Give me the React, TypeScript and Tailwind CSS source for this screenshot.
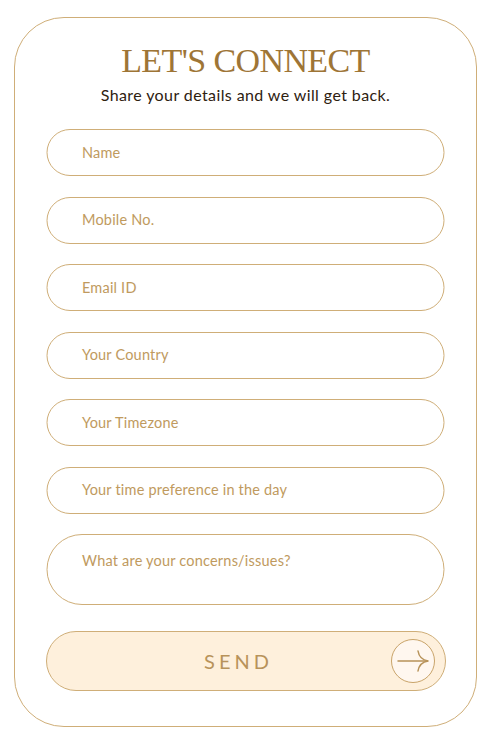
import React from "react";

const fields = [
  "Name",
  "Mobile No.",
  "Email ID",
  "Your Country",
  "Your Timezone",
  "Your time preference in the day",
];

export default function App() {
  return (
    <div className="w-[490px] h-[745px] bg-white pt-[17px] pl-[14px]" style={{ fontFamily: "Lato, 'Noto Sans', sans-serif" }}>
      <div className="w-[463px] h-[710px] rounded-[50px] border border-[#cfae78] flex flex-col items-center pt-[23px]">
        <h1
          className="text-[34px] leading-[40px] text-[#9e7536] tracking-[-0.6px]"
          style={{ fontFamily: "'Liberation Serif', serif" }}
        >
          LET'S CONNECT
        </h1>
        <p className="mt-[5px] text-[16px] leading-[18px] tracking-[0.4px] text-[#2e2110]">
          Share your details and we will get back.
        </p>
        <div className="mt-[25px] w-[398px] -translate-x-[0.5px] flex flex-col gap-[20.5px]">
          {fields.map((f) => (
            <div
              key={f}
              className="h-[47px] rounded-full border border-[#cfae78] flex items-center pl-[35px] text-[14.5px] tracking-[0.2px] text-[#c09a5e]"
            >
              {f}
            </div>
          ))}
          <div className="h-[71px] rounded-[36px] border border-[#cfae78] pl-[35px] pt-[15px] text-[14.5px] tracking-[0.2px] text-[#c09a5e]">
            What are your concerns/issues?
          </div>
        </div>
        <div className="mt-[26px] w-[400px] h-[60px] rounded-full border border-[#cfae78] bg-[#fef0dc] flex items-center pr-[10px]">
          <div className="flex-1 flex justify-center pl-[40px]">
            <span className="text-[20px] tracking-[4px] text-[#b8935a]">SEND</span>
          </div>
          <div className="w-[44px] h-[44px] rounded-full border border-[#c9a46a] bg-[#fff7ef] flex items-center justify-center">
            <svg width="36" height="24" viewBox="0 0 36 24" fill="none" stroke="#b8935a" strokeWidth="1.5" strokeLinecap="round">
              <path d="M3 12 H33" />
              <path d="M23 2 C24 8 27 11 33 12 C27 13 24 16 23 22" />
            </svg>
          </div>
        </div>
      </div>
    </div>
  );
}
